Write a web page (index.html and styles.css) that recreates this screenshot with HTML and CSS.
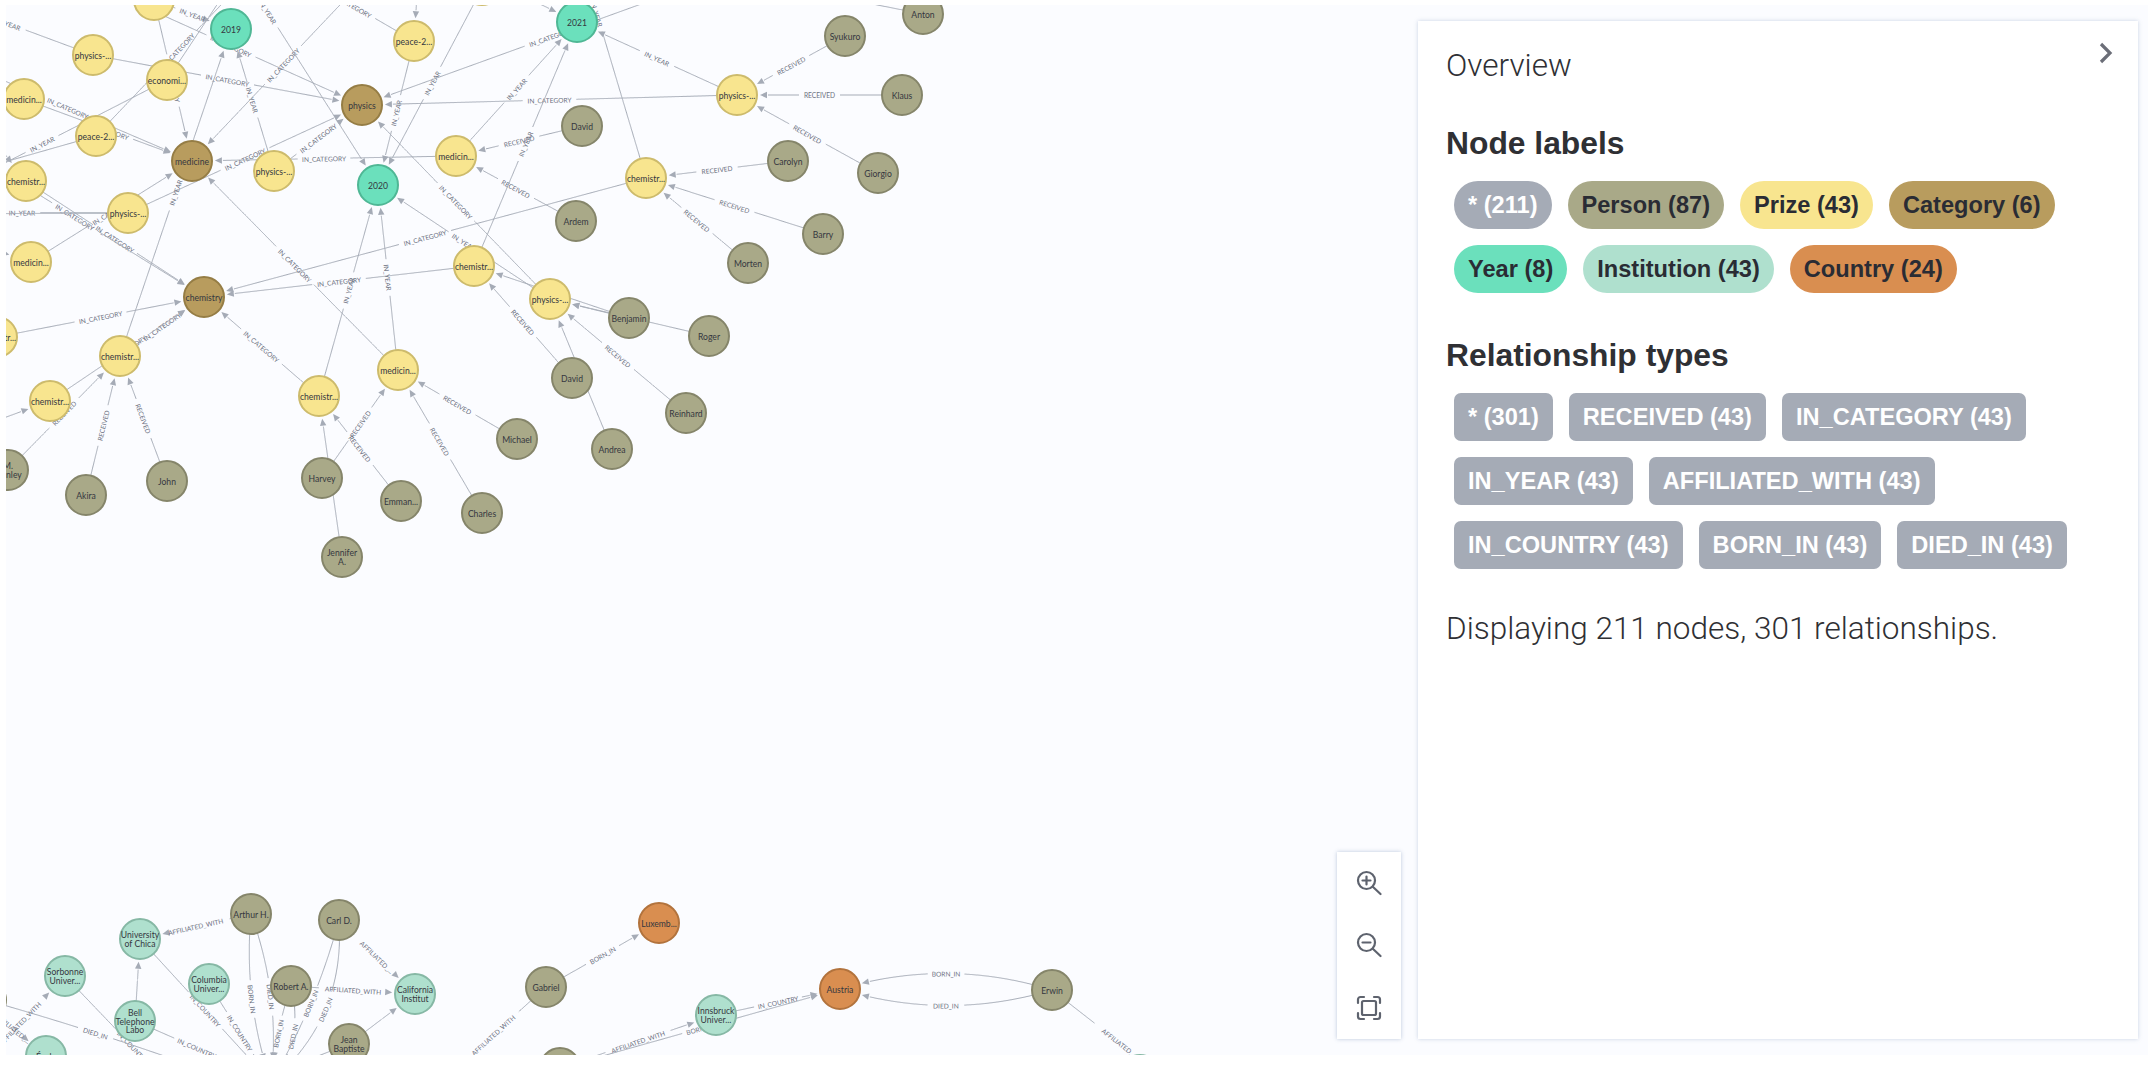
FILE: index.html
```html
<!DOCTYPE html>
<html lang="en">
<head>
    <meta charset="UTF-8">
    <title>Graph overview</title>
    <link rel="stylesheet" href="styles.css">
</head>
<body>
    <div class="graph">
        <svg id="canvas" class="canvas" viewBox="6 5 2142 1050"></svg>

        <div class="toolbox">
            <button class="tool">
                <svg width="26" height="26" viewBox="0 0 26 26"><circle cx="10.5" cy="10.5" r="8.5"/><path d="M16.8 16.8 24.5 24M10.5 6.5v8M6.5 10.5h8"/></svg>
            </button>
            <button class="tool">
                <svg width="26" height="26" viewBox="0 0 26 26"><circle cx="10.5" cy="10.5" r="8.5"/><path d="M16.8 16.8 24.5 24M6.5 10.5h8"/></svg>
            </button>
            <button class="tool">
                <svg width="26" height="26" viewBox="0 0 26 26"><path d="M2 8V4.5A2.5 2.5 0 0 1 4.500 2H8M18 2h3.500A2.500 2.500 0 0 1 24 4.500V8M24 18v3.500a2.500 2.500 0 0 1-2.500 2.500H18M8 24H4.500A2.500 2.500 0 0 1 2 21.500V18"/><rect x="6" y="6" width="14" height="14" rx="1.500"/></svg>
            </button>
        </div>

        <div class="panel">
            <div class="panelHead">
                <span class="panelTitle">Overview</span>
                <svg class="chevron" width="14" height="22" viewBox="0 0 14 22"><path d="M2 2 11 11 2 20"/></svg>
            </div>

            <h3 class="heading">Node labels</h3>
            <div class="chips">
                <span class="chip pill all">* (211)</span>
                <span class="chip pill person">Person (87)</span>
                <span class="chip pill prize">Prize (43)</span>
                <span class="chip pill category">Category (6)</span>
                <span class="chip pill year">Year (8)</span>
                <span class="chip pill institution">Institution (43)</span>
                <span class="chip pill country">Country (24)</span>
            </div>

            <h3 class="heading relHeading">Relationship types</h3>
            <div class="chips">
                <span class="chip all">* (301)</span>
                <span class="chip all">RECEIVED (43)</span>
                <span class="chip all">IN_CATEGORY (43)</span>
                <span class="chip all">IN_YEAR (43)</span>
                <span class="chip all">AFFILIATED_WITH (43)</span>
                <span class="chip all">IN_COUNTRY (43)</span>
                <span class="chip all">BORN_IN (43)</span>
                <span class="chip all">DIED_IN (43)</span>
            </div>

            <p class="summary">Displaying 211 nodes, 301 relationships.</p>
        </div>
    </div>

    <script src="graph.js"></script>
</body>
</html>
```

FILE: styles.css
```css
body {
    margin: 0;
    height: 1074px;
    overflow: hidden;
    background-color: #fff;
    font-family: "Liberation Sans", Arial, sans-serif;
}

.graph {
    position: relative;
    height: 1050px;
    margin: 5px 0 0 6px;
    background-color: #fbfcff;
    overflow: hidden;
}

.canvas {
    display: block;
    width: 100%;
    height: 100%;
}

.edge {
    fill: none;
    stroke: #a5abb6;
    stroke-width: 1;
}
.arrow {
    fill: #a5abb6;
}
.edgeLabel {
    font-family: Lato, sans-serif;
    font-size: 6.6px;
    fill: #6b7080;
    text-anchor: middle;
    dominant-baseline: central;
}

.node {
    stroke-width: 2;
}
.nodeLabel {
    font-family: Lato, sans-serif;
    font-size: 8.6px;
    fill: #35373f;
    text-anchor: middle;
    dominant-baseline: central;
}

.n-person { fill: #a9a988; stroke: #85856a; }
.n-prize { fill: #f8e58f; stroke: #cdbb6c; }
.n-category { fill: #b89c5e; stroke: #957d45; }
.n-year { fill: #6be0bc; stroke: #4fb795; }
.n-institution { fill: #afe0ce; stroke: #86b8a5; }
.n-country { fill: #d98e50; stroke: #b2733d; }

.toolbox {
    position: absolute;
    right: 747px;
    bottom: 16px;
    width: 64px;
    height: 187px;
    display: flex;
    flex-direction: column;
    justify-content: space-around;
    align-items: center;
    background-color: #fff;
    box-shadow: 0 0 4px rgba(110, 135, 175, 0.45);
}
.tool {
    display: flex;
    padding: 0;
    border: 0;
    background: none;
}
.tool svg {
    fill: none;
    stroke: #5e636e;
    stroke-width: 2.2;
    stroke-linecap: round;
}

.panel {
    position: absolute;
    top: 16px;
    right: 10px;
    bottom: 16px;
    width: 720px;
    box-sizing: border-box;
    padding: 28px 25px 0 28px;
    background-color: #fff;
    color: #2f3034;
    box-shadow: 0 0 4px rgba(110, 135, 175, 0.35);
}
.panelHead {
    display: flex;
    justify-content: space-between;
    align-items: flex-start;
    height: 34px;
}
.panelTitle {
    font-family: Roboto, sans-serif;
    font-size: 31.5px;
    font-weight: 300;
    line-height: 34px;
}
.chevron {
    margin-top: -7px;
    fill: none;
    stroke: #6b6e78;
    stroke-width: 3.2;
}

.heading {
    margin: 43px 0 21px;
    font-size: 31.8px;
    line-height: 34px;
    font-weight: 700;
}
.relHeading {
    margin-top: 45px;
}

.chips {
    display: flex;
    flex-wrap: wrap;
    gap: 16px;
    padding-left: 8px;
}
.chip {
    height: 48px;
    padding: 0 14px;
    line-height: 48px;
    border-radius: 7px;
    font-size: 23.6px;
    font-weight: 700;
    color: #2a2c34;
    white-space: nowrap;
}
.pill {
    border-radius: 24px;
}
.all { background-color: #a5abb6; color: #fff; }
.person { background-color: #a9a988; }
.prize { background-color: #f8e58f; }
.category { background-color: #b89c5e; }
.year { background-color: #6be0bc; }
.institution { background-color: #afe0ce; }
.country { background-color: #d98e50; }

.summary {
    margin: 43px 0 0;
    font-family: Roboto, sans-serif;
    font-size: 31.5px;
    font-weight: 300;
    line-height: 34px;
}
```

FILE: graph.js
```js
// coordinates are page pixels, the svg viewBox starts at the graph corner
const R = 21
const NS = "http://www.w3.org/2000/svg"
const svg = document.getElementById("canvas")

const nodes = {
    // Prize
    y0: ["prize", 154, 0, ""],
    yt: ["prize", 482, -15, ""],
    ph1: ["prize", 93, 55, "physics-..."],
    pe1: ["prize", 414, 41, "peace-2..."],
    ec: ["prize", 167, 80, "economi..."],
    me1: ["prize", 24, 99, "medicin..."],
    pe2: ["prize", 96, 136, "peace-2..."],
    ph2: ["prize", 274, 171, "physics-..."],
    me2: ["prize", 456, 156, "medicin..."],
    ch1: ["prize", 26, 181, "chemistr..."],
    ph3: ["prize", 128, 213, "physics-..."],
    me3: ["prize", 31, 262, "medicin..."],
    ch4: ["prize", 474, 266, "chemistr..."],
    ph4: ["prize", 737, 95, "physics-..."],
    ch3: ["prize", 646, 178, "chemistr..."],
    ph5: ["prize", 550, 299, "physics-..."],
    ch2: ["prize", 120, 356, "chemistr..."],
    ch7: ["prize", 50, 401, "chemistr..."],
    ch8: ["prize", -3, 337, "chemistr..."],
    ch6: ["prize", 319, 396, "chemistr..."],
    me5: ["prize", 398, 370, "medicin..."],
    // Category
    catPh: ["category", 362, 105, "physics"],
    catMe: ["category", 192, 161, "medicine"],
    catCh: ["category", 204, 297, "chemistry"],
    // Year
    y19: ["year", 231, 29, "2019"],
    y20: ["year", 378, 185, "2020"],
    y21: ["year", 577, 22, "2021"],
    // Person
    anton: ["person", 923, 14, "Anton"],
    syukuro: ["person", 845, 36, "Syukuro"],
    klaus: ["person", 902, 95, "Klaus"],
    david: ["person", 582, 126, "David"],
    carolyn: ["person", 788, 161, "Carolyn"],
    giorgio: ["person", 878, 173, "Giorgio"],
    barry: ["person", 823, 234, "Barry"],
    morten: ["person", 748, 263, "Morten"],
    ardem: ["person", 576, 221, "Ardem"],
    benjamin: ["person", 629, 318, "Benjamin"],
    roger: ["person", 709, 336, "Roger"],
    david2: ["person", 572, 378, "David"],
    reinhard: ["person", 686, 413, "Reinhard"],
    andrea: ["person", 612, 449, "Andrea"],
    michael: ["person", 517, 439, "Michael"],
    charles: ["person", 482, 513, "Charles"],
    emman: ["person", 401, 501, "Emman..."],
    jennifer: ["person", 342, 557, "Jennifer\nA."],
    harvey: ["person", 322, 478, "Harvey"],
    stanley: ["person", 8, 470, "M.\nStanley"],
    akira: ["person", 86, 495, "Akira"],
    john: ["person", 167, 481, "John"],
    arthur: ["person", 251, 914, "Arthur H."],
    carl: ["person", 339, 920, "Carl D."],
    robert: ["person", 291, 986, "Robert A."],
    jean: ["person", 349, 1044, "Jean\nBaptiste"],
    leftP: ["person", -14, 1000, ""],
    gabriel: ["person", 546, 987, "Gabriel"],
    botP: ["person", 560, 1068, ""],
    erwin: ["person", 1052, 990, "Erwin"],
    // Institution
    chica: ["institution", 140, 939, "University\nof Chica"],
    sorbonne: ["institution", 65, 976, "Sorbonne\nUniver..."],
    columbia: ["institution", 209, 984, "Columbia\nUniver..."],
    caltech: ["institution", 415, 994, "California\nInstitut"],
    bell: ["institution", 135, 1021, "Bell\nTelephone\nLabo"],
    ecole: ["institution", 46, 1056, "École"],
    innsbruck: ["institution", 716, 1015, "Innsbruck\nUniver..."],
    tealB: ["institution", 1140, 1075, ""],
    // Country
    luxemb: ["country", 659, 923, "Luxemb..."],
    austria: ["country", 840, 989, "Austria"],
    usa: ["country", 271, 1082, ""]
}

const CAT = "IN_CATEGORY", YEAR = "IN_YEAR", REC = "RECEIVED", AFF = "AFFILIATED_WITH"
const CTRY = "IN_COUNTRY", BORN = "BORN_IN", DIED = "DIED_IN"

// [from, to, label, bend]; an array instead of a key is a node outside the view
const edges = [
    ["ph1", [-77, -8], YEAR],
    ["ph1", "catPh", CAT],
    [[100, -13], "catPh", CAT],
    ["y0", "y19", YEAR],
    ["y0", "catMe", CAT],
    ["pe2", [260, -36], CAT],
    ["ec", [250, -45]],
    ["me1", "catMe", CAT],
    [[-56, 55], "catMe", CAT],
    ["ec", [-83, 208], YEAR],
    ["pe2", [-80, 186]],
    ["ch1", "catCh", CAT],
    [[-54, 137], "catCh", CAT],
    [[-30, 110], "ch1"],
    ["ph3", [-84, 212], YEAR],
    ["ph3", [-84, 214]],
    ["me3", "catMe", CAT],
    [[-20, 245], "me3"],
    ["ph3", "catPh", CAT],
    ["ch2", "y19", YEAR],
    ["ph2", "y19", YEAR],
    ["ph2", "catPh", CAT],
    ["me2", "catMe", CAT],
    [[374, -31], "catMe", CAT],
    [[158, -161], "y20", YEAR],
    ["pe1", [290, -31], CAT],
    [[420, -50], "pe1"],
    ["pe1", "y20", YEAR],
    [[486, -19], "y20", YEAR],
    [[738, -31], "catPh", CAT],
    ["ph4", "catPh", CAT],
    ["me2", "y21", YEAR],
    ["ch4", "y21", YEAR],
    ["ph4", "y21", YEAR],
    ["ch3", [548, -150], YEAR],
    ["ch3", "catCh", CAT],
    ["ch4", "catCh", CAT],
    [[470, -30], "y21"],
    ["david", "me2", REC],
    ["ardem", "me2", REC],
    ["syukuro", "ph4", REC],
    ["klaus", "ph4", REC],
    ["giorgio", "ph4", REC],
    ["carolyn", "ch3", REC],
    ["barry", "ch3", REC],
    ["morten", "ch3", REC],
    ["anton", [650, -40]],
    ["me5", "catMe", CAT],
    ["ph5", "catPh", CAT],
    ["ph5", "y20", YEAR],
    ["david2", "ch4", REC],
    ["benjamin", "ch4"],
    ["benjamin", "ph5"],
    ["roger", "ph5"],
    ["reinhard", "ph5", REC],
    ["andrea", "ph5"],
    ["michael", "me5", REC],
    ["charles", "me5", REC],
    ["harvey", "me5", REC],
    ["emman", "ch6", REC],
    ["jennifer", "ch6"],
    ["ch6", "catCh", CAT],
    ["ch6", "y20", YEAR],
    ["me5", "y20", YEAR],
    ["ch2", "catCh", CAT],
    ["ch8", "catCh", CAT],
    ["ch7", "catCh", CAT],
    ["stanley", "ch2", REC],
    [[-70, 445], "ch7"],
    ["akira", "ch2", REC],
    ["john", "ch2", REC],
    // lower part
    ["arthur", "chica", AFF],
    ["bell", "chica"],
    ["chica", "usa", CTRY],
    ["columbia", "usa", CTRY],
    ["bell", [259, 1075], CTRY],
    ["arthur", "usa", BORN, 9],
    ["arthur", "usa", DIED, -10],
    ["robert", "usa", BORN, 3],
    ["robert", "usa", DIED, -12],
    ["carl", "usa", BORN, -6],
    ["carl", "usa", DIED, -22],
    ["robert", "caltech", AFF],
    ["carl", "caltech", "AFFILIATED_..."],
    ["jean", "caltech"],
    ["jean", [230, 1090]],
    [[-25, 1070], "sorbonne", AFF],
    ["sorbonne", [201, 1118], CTRY],
    ["leftP", [204, 1070], DIED, -2],
    [[-20, 1000], "ecole", "AFFILIATED_..."],
    ["gabriel", "luxemb", BORN],
    ["gabriel", [440, 1083], AFF],
    ["botP", "innsbruck", AFF],
    ["botP", "austria", BORN],
    ["innsbruck", "austria", CTRY],
    ["erwin", "austria", BORN, 16],
    ["erwin", "austria", DIED, -16],
    ["erwin", [1188, 1096], "AFFILIATED_..."]
]

function el(tag, attrs, parent) {
    const e = document.createElementNS(NS, tag)
    for (const k in attrs) e.setAttribute(k, attrs[k])
    parent.appendChild(e)
    return e
}

function pos(n) {
    if (Array.isArray(n)) return { x: n[0], y: n[1] }
    return { x: nodes[n][1], y: nodes[n][2] }
}

function dist(a, b) {
    return Math.hypot(a.x - b.x, a.y - b.y)
}

function polyline(pts, parent) {
    if (pts.length < 2) return
    const s = pts.map(p => p.x.toFixed(1) + "," + p.y.toFixed(1)).join(" ")
    el("polyline", { points: s, class: "edge" }, parent)
}

function drawEdge(from, to, label, bend, parent) {
    const p = pos(from), q = pos(to)
    const len = dist(p, q)
    bend = bend || 0
    // bend is the offset of the curve middle, control point is twice as far
    const c = {
        x: (p.x + q.x) / 2 - (q.y - p.y) / len * bend * 2,
        y: (p.y + q.y) / 2 + (q.x - p.x) / len * bend * 2
    }
    const at = t => ({
        x: (1 - t) * (1 - t) * p.x + 2 * t * (1 - t) * c.x + t * t * q.x,
        y: (1 - t) * (1 - t) * p.y + 2 * t * (1 - t) * c.y + t * t * q.y
    })
    const mid = at(0.5)
    const gap = label ? label.length * 2 + 4 : 0
    const steps = Math.ceil(len)
    let first = [], second = [], tip = null, base = null

    for (let i = 0; i <= steps; i++) {
        const pt = at(i / steps)
        const d = dist(pt, q)
        if (d <= R + 2 && !tip) tip = pt
        if (d > R + 9) base = pt
        else continue
        if (gap && dist(pt, mid) < gap) continue
        if (i / steps < 0.5) first.push(pt)
        else second.push(pt)
    }
    polyline(first, parent)
    polyline(second, parent)

    if (tip && base) {
        const a = Math.atan2(tip.y - base.y, tip.x - base.x) * 180 / Math.PI
        el("polygon", {
            points: "0,0 -7,-3.2 -7,3.2",
            class: "arrow",
            transform: `translate(${tip.x.toFixed(1)} ${tip.y.toFixed(1)}) rotate(${a.toFixed(1)})`
        }, parent)
    }
    if (label) {
        let a = Math.atan2(q.y - p.y, q.x - p.x) * 180 / Math.PI
        if (a > 90) a -= 180
        if (a < -90) a += 180
        const t = el("text", {
            class: "edgeLabel",
            transform: `translate(${mid.x.toFixed(1)} ${mid.y.toFixed(1)}) rotate(${a.toFixed(1)})`
        }, parent)
        t.textContent = label
    }
}

function drawNode(n, parent) {
    const [type, x, y, text] = n
    el("circle", { cx: x, cy: y, r: R - 1, class: "node n-" + type }, parent)
    const lines = text ? text.split("\n") : []
    lines.forEach((line, i) => {
        const t = el("text", {
            class: "nodeLabel",
            x: x,
            y: y + 0.5 + (i - (lines.length - 1) / 2) * 8.2
        }, parent)
        t.textContent = line
    })
}

const edgeLayer = el("g", {}, svg)
const nodeLayer = el("g", {}, svg)
edges.forEach(e => drawEdge(e[0], e[1], e[2], e[3], edgeLayer))
Object.values(nodes).forEach(n => drawNode(n, nodeLayer))
```
